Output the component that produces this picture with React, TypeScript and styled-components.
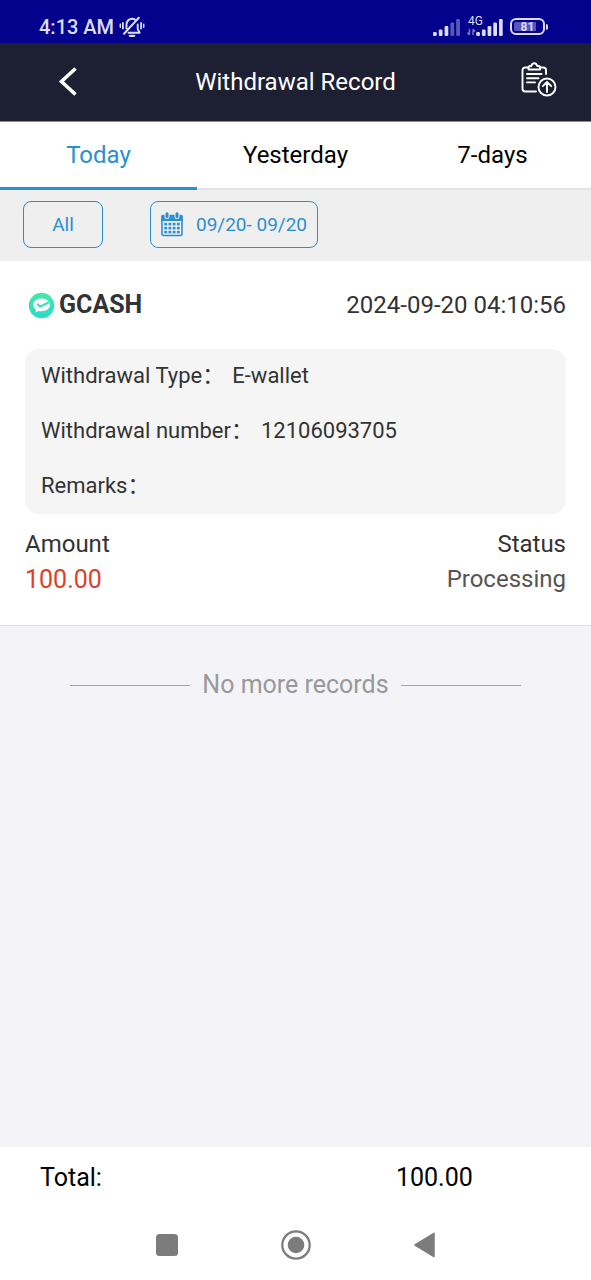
import React, { useState } from "react";
import styled, { createGlobalStyle } from "styled-components";

const BLUE = "#2b8fd0";

const GlobalStyle = createGlobalStyle`
  *, *::before, *::after { box-sizing: border-box; }
  body {
    margin: 0;
    background: #f4f3f8;
    color: #333;
    font-family: Roboto, "Noto Sans CJK SC", sans-serif;
  }
  button {
    margin: 0;
    padding: 0;
    border: 0;
    background: none;
    color: inherit;
    font: inherit;
    cursor: pointer;
  }
  svg { display: block; flex: none; }
`;

const Page = styled.div`
  display: flex;
  flex-direction: column;
  min-height: 100vh;
`;

const StatusBar = styled.div`
  display: flex;
  justify-content: space-between;
  align-items: center;
  height: 43px;
  padding: 10px 43px 0 39px;
  background: #02028c;
  color: #dcdcff;
`;

const StatusGroup = styled.div<{ $gap: number }>`
  display: flex;
  align-items: center;
  gap: ${(p) => p.$gap}px;
`;

const Clock = styled.span`
  font-size: 20px;
  font-weight: 500;
  line-height: 24px;
`;

const Network = styled.span`
  position: relative;
`;

const NetworkLabel = styled.span`
  position: absolute;
  top: -3px;
  left: 1px;
  font-size: 12px;
  line-height: 12px;
`;

const Battery = styled.span`
  display: flex;
  align-items: center;
  gap: 1px;

  &::after {
    content: "";
    width: 2px;
    height: 6px;
    border-radius: 0 2px 2px 0;
    background: #dcdcff;
  }
`;

const BatteryBody = styled.span`
  width: 35px;
  height: 17px;
  padding: 2px;
  border: 2px solid #dcdcff;
  border-radius: 6px;
`;

const BatteryLevel = styled.span`
  display: block;
  height: 9px;
  border-radius: 2px;
  background: linear-gradient(90deg, #5a55bd 80%, transparent 80%);
  font-size: 12px;
  font-weight: 700;
  line-height: 10px;
  text-align: center;
`;

const Header = styled.header`
  display: grid;
  grid-template-columns: 1fr auto 1fr;
  align-items: center;
  height: 79px;
  padding: 0 34px 0 56px;
  border-bottom: 1px solid #8d8d96;
  background: #1d2032;
  color: #fff;
`;

const Title = styled.h1`
  margin: 0 22px 0 0;
  font-size: 24px;
  font-weight: 400;
  line-height: 28px;
`;

const IconButton = styled.button<{ $end?: boolean }>`
  justify-self: ${(p) => (p.$end ? "end" : "start")};
`;

const Tabs = styled.div`
  display: flex;
  height: 68px;
  background: #fff;
`;

const Tab = styled.button<{ $active: boolean }>`
  flex: 1;
  border-bottom: ${(p) => (p.$active ? `3px solid ${BLUE}` : "2px solid #e2e2e2")};
  color: ${(p) => (p.$active ? BLUE : "#000")};
  font-size: 24px;
  line-height: 28px;
`;

const Filters = styled.div`
  display: flex;
  gap: 47px;
  padding: 11px 23px 13px;
  background: #efefef;
`;

const FilterButton = styled.button<{ $wide?: boolean }>`
  display: flex;
  align-items: center;
  justify-content: center;
  gap: 13px;
  width: ${(p) => (p.$wide ? 168 : 80)}px;
  height: 47px;
  border: 1px solid ${BLUE};
  border-radius: 8px;
  color: ${BLUE};
  font-size: 19px;
  line-height: 24px;
`;

const Content = styled.main`
  flex: 1;
`;

const RecordCard = styled.article`
  padding: 24px 25px 28px;
  border-bottom: 1px solid #dedee2;
  background: #fff;
`;

const RecordHead = styled.div`
  display: flex;
  align-items: center;
  justify-content: space-between;
  height: 40px;
  margin-bottom: 24px;
`;

const Provider = styled.h2`
  display: flex;
  align-items: center;
  gap: 4px;
  margin: 0;
  padding-left: 3px;
  font-size: 25px;
  font-weight: 700;
  line-height: 28px;
`;

const RecordTime = styled.time`
  font-size: 24px;
  line-height: 28px;
`;

const Details = styled.dl`
  margin: 0 0 13px;
  padding: 0 16px;
  border-radius: 14px;
  background: #f5f5f5;
`;

const DetailRow = styled.div`
  display: flex;
  align-items: center;
  gap: 8px;
  height: 55px;
  padding-bottom: 2px;
  font-size: 22px;
  line-height: 26px;
`;

const DetailLabel = styled.dt``;

const DetailValue = styled.dd`
  margin: 0;
`;

const Summary = styled.div`
  display: flex;
  justify-content: space-between;
`;

const SummaryColumn = styled.div<{ $end?: boolean }>`
  text-align: ${(p) => (p.$end ? "right" : "left")};
`;

const SummaryText = styled.div<{ $color?: string; $size?: number }>`
  color: ${(p) => p.$color ?? "#333"};
  font-size: ${(p) => p.$size ?? 24}px;
  line-height: 35px;
`;

const EndOfList = styled.p`
  display: flex;
  align-items: center;
  justify-content: center;
  gap: 12px;
  margin: 43px 0;
  color: #999;
  font-size: 25px;
  line-height: 32px;

  &::before,
  &::after {
    content: "";
    width: 120px;
    height: 1px;
    background: #a5a5a8;
  }
`;

const TotalBar = styled.footer`
  display: flex;
  align-items: center;
  justify-content: space-between;
  height: 62px;
  padding: 0 20% 0 40px;
  background: #fff;
  color: #000;
  font-size: 25px;
  line-height: 30px;
`;

const SystemNav = styled.nav`
  display: flex;
  justify-content: center;
  height: 71px;
  background: #fff;
`;

const NavButton = styled.button`
  display: flex;
  flex: 0 1 129px;
  align-items: center;
  justify-content: center;
`;

const MutedBellIcon = () => (
  <svg width="26" height="22" viewBox="0 0 26 22" fill="none" stroke="#dcdcff" strokeLinecap="round" strokeLinejoin="round" aria-hidden="true">
    <path d="M7.500 12.500V8.500a5.600 5.600 0 0 1 9-4.500M18.700 8.500V13l2 3.700H9.500" strokeWidth="1.900" />
    <path d="M19.800 1.800 5 17.800" strokeWidth="2" />
    <path d="M10.800 19.800h4.400" strokeWidth="2.200" />
    <path d="M3.900 7v5.500M22.100 7v5.500" strokeWidth="1.800" />
    <path d="M1.300 8.300v3M24.700 8.300v3" strokeWidth="1.500" />
  </svg>
);

const SignalIcon = ({ strength }: { strength: number }) => (
  <svg width="27" height="18" viewBox="0 0 27 18" fill="#dcdcff" aria-hidden="true">
    {[4, 6.5, 10, 13.5, 17].map((h, i) => (
      <rect key={h} x={i * 5.8} y={18 - h} width="3.700" height={h} rx="1.200" opacity={i < strength ? 1 : 0.4} />
    ))}
  </svg>
);

const DataSignalIcon = () => (
  <svg width="36" height="18" viewBox="0 0 36 18" fill="#dcdcff" aria-hidden="true">
    <path d="M2.500 11v5.500M.5 14.500l2 2.500M6 17v-5.500M6 11l2.200 2.500" fill="none" stroke="#dcdcff" strokeWidth="1.600" opacity=".5" />
    {[4, 6.5, 10, 13.5, 17].map((h, i) => (
      <rect key={h} x={9.2 + i * 5.7} y={18 - h} width="3.700" height={h} rx="1.200" />
    ))}
  </svg>
);

const BackIcon = () => (
  <svg width="24" height="32" viewBox="0 0 24 32" fill="none" stroke="#fff" strokeWidth="3.600" aria-hidden="true">
    <path d="M19.500 2.500 5.500 15.500l14 13" />
  </svg>
);

const ClipboardUpIcon = () => (
  <svg width="36" height="40" viewBox="0 0 36 40" fill="none" stroke="#fff" strokeWidth="1.900" strokeLinecap="round" strokeLinejoin="round" aria-hidden="true">
    <path d="M7.500 5.500H4.200A2.700 2.700 0 0 0 1.500 8.200v18.600a2.700 2.700 0 0 0 2.700 2.700H15M19 5.500h3.300A2.700 2.700 0 0 1 25 8.200V12" />
    <path d="M7.500 7.500V5.600c0-1.100.7-1.600 1.800-1.600h1C10.700 2.200 11.700 1.200 13.200 1.200S15.700 2.200 16.200 4h1c1.100 0 1.800.5 1.800 1.600v1.900z" />
    <path d="M6 12h14.500M6 16.200h11.500M6 20.400h8" />
    <circle cx="26" cy="25" r="8.500" />
    <path d="M26 30v-9.500M21.800 24.200l4.200-4.200 4.200 4.200" />
  </svg>
);

const CalendarIcon = () => (
  <svg width="22" height="26" viewBox="0 0 22 26" aria-hidden="true">
    <rect x="1" y="3.500" width="20" height="20" rx="1.500" fill="#efefef" stroke={BLUE} strokeWidth="1.600" />
    <path d="M.3 4.500q0-1.500 1.500-1.500h18.400q1.500 0 1.500 1.500V9H.3z" fill={BLUE} />
    {[6, 16].map((x) => (
      <path key={x} d={`M${x} 1.500v3`} stroke="#efefef" strokeWidth="5" strokeLinecap="round" />
    ))}
    {[6, 16].map((x) => (
      <path key={`ring-${x}`} d={`M${x} 1.800v2.600`} stroke={BLUE} strokeWidth="3" strokeLinecap="round" />
    ))}
    {[10.800, 14.800, 18.800].map((y) =>
      [3.300, 7.500, 11.700, 15.900].map((x) => (
        <rect key={`${x}-${y}`} x={x} y={y} width="2.800" height="2.600" fill={BLUE} />
      ))
    )}
  </svg>
);

const GcashIcon = () => (
  <svg width="27" height="27" viewBox="0 0 27 27" aria-hidden="true">
    <defs>
      <linearGradient id="coin" x1="0" y1="0" x2="0" y2="1">
        <stop offset="0" stopColor="#45eaa6" />
        <stop offset="1" stopColor="#25dcc9" />
      </linearGradient>
    </defs>
    <circle cx="13.500" cy="13.500" r="12.700" fill="url(#coin)" />
    <path d="M13.500 6.500c5 0 8.500 2.700 8.500 6.300s-3.500 6.500-8.500 6.500c-1 0-2-.1-2.900-.4L7.500 20.500l.3-3C6 16.300 5 14.700 5 12.800c0-3.600 3.500-6.300 8.500-6.300z" fill="#fff" />
    <path d="m9.800 12.300 2.400 2.400 8.300-4.200" fill="none" stroke="#35dfb8" strokeWidth="2" strokeLinecap="round" strokeLinejoin="round" />
  </svg>
);

const RecentsIcon = () => (
  <svg width="22" height="22" viewBox="0 0 22 22" aria-hidden="true">
    <rect width="22" height="22" rx="3.500" fill="#7c7c7c" />
  </svg>
);

const HomeIcon = () => (
  <svg width="30" height="30" viewBox="0 0 30 30" aria-hidden="true">
    <circle cx="15" cy="15" r="13.700" fill="none" stroke="#7c7c7c" strokeWidth="2.300" />
    <circle cx="15" cy="15" r="8.300" fill="#7c7c7c" />
  </svg>
);

const NavBackIcon = () => (
  <svg width="22" height="26" viewBox="0 0 22 26" aria-hidden="true">
    <path d="M20 1.500v23L1 13z" fill="#7c7c7c" stroke="#7c7c7c" strokeWidth="1.500" strokeLinejoin="round" />
  </svg>
);

const tabs = ["Today", "Yesterday", "7-days"];

const details = [
  { label: "Withdrawal Type", value: "E-wallet" },
  { label: "Withdrawal number", value: "12106093705" },
  { label: "Remarks", value: "" },
];

export default function App() {
  const [activeTab, setActiveTab] = useState(tabs[0]);

  return (
    <Page>
      <GlobalStyle />
      <StatusBar>
        <StatusGroup $gap={5}>
          <Clock>4:13 AM</Clock>
          <MutedBellIcon />
        </StatusGroup>
        <StatusGroup $gap={7}>
          <SignalIcon strength={3} />
          <Network>
            <NetworkLabel>4G</NetworkLabel>
            <DataSignalIcon />
          </Network>
          <Battery>
            <BatteryBody>
              <BatteryLevel>81</BatteryLevel>
            </BatteryBody>
          </Battery>
        </StatusGroup>
      </StatusBar>

      <Header>
        <IconButton aria-label="Back">
          <BackIcon />
        </IconButton>
        <Title>Withdrawal Record</Title>
        <IconButton $end aria-label="Withdrawal report">
          <ClipboardUpIcon />
        </IconButton>
      </Header>

      <Tabs role="tablist">
        {tabs.map((tab) => (
          <Tab
            key={tab}
            role="tab"
            aria-selected={tab === activeTab}
            $active={tab === activeTab}
            onClick={() => setActiveTab(tab)}
          >
            {tab}
          </Tab>
        ))}
      </Tabs>

      <Filters>
        <FilterButton>All</FilterButton>
        <FilterButton $wide>
          <CalendarIcon />
          09/20- 09/20
        </FilterButton>
      </Filters>

      <Content>
        <RecordCard>
          <RecordHead>
            <Provider>
              <GcashIcon />
              GCASH
            </Provider>
            <RecordTime dateTime="2024-09-20T04:10:56">2024-09-20 04:10:56</RecordTime>
          </RecordHead>
          <Details>
            {details.map(({ label, value }) => (
              <DetailRow key={label}>
                <DetailLabel>{label}：</DetailLabel>
                <DetailValue>{value}</DetailValue>
              </DetailRow>
            ))}
          </Details>
          <Summary>
            <SummaryColumn>
              <SummaryText>Amount</SummaryText>
              <SummaryText $color="#dd3f2b" $size={25}>100.00</SummaryText>
            </SummaryColumn>
            <SummaryColumn $end>
              <SummaryText>Status</SummaryText>
              <SummaryText $color="#555">Processing</SummaryText>
            </SummaryColumn>
          </Summary>
        </RecordCard>
        <EndOfList>No more records</EndOfList>
      </Content>

      <TotalBar>
        <span>Total:</span>
        <span>100.00</span>
      </TotalBar>

      <SystemNav aria-label="System">
        <NavButton aria-label="Recent apps">
          <RecentsIcon />
        </NavButton>
        <NavButton aria-label="Home">
          <HomeIcon />
        </NavButton>
        <NavButton aria-label="Back">
          <NavBackIcon />
        </NavButton>
      </SystemNav>
    </Page>
  );
}
